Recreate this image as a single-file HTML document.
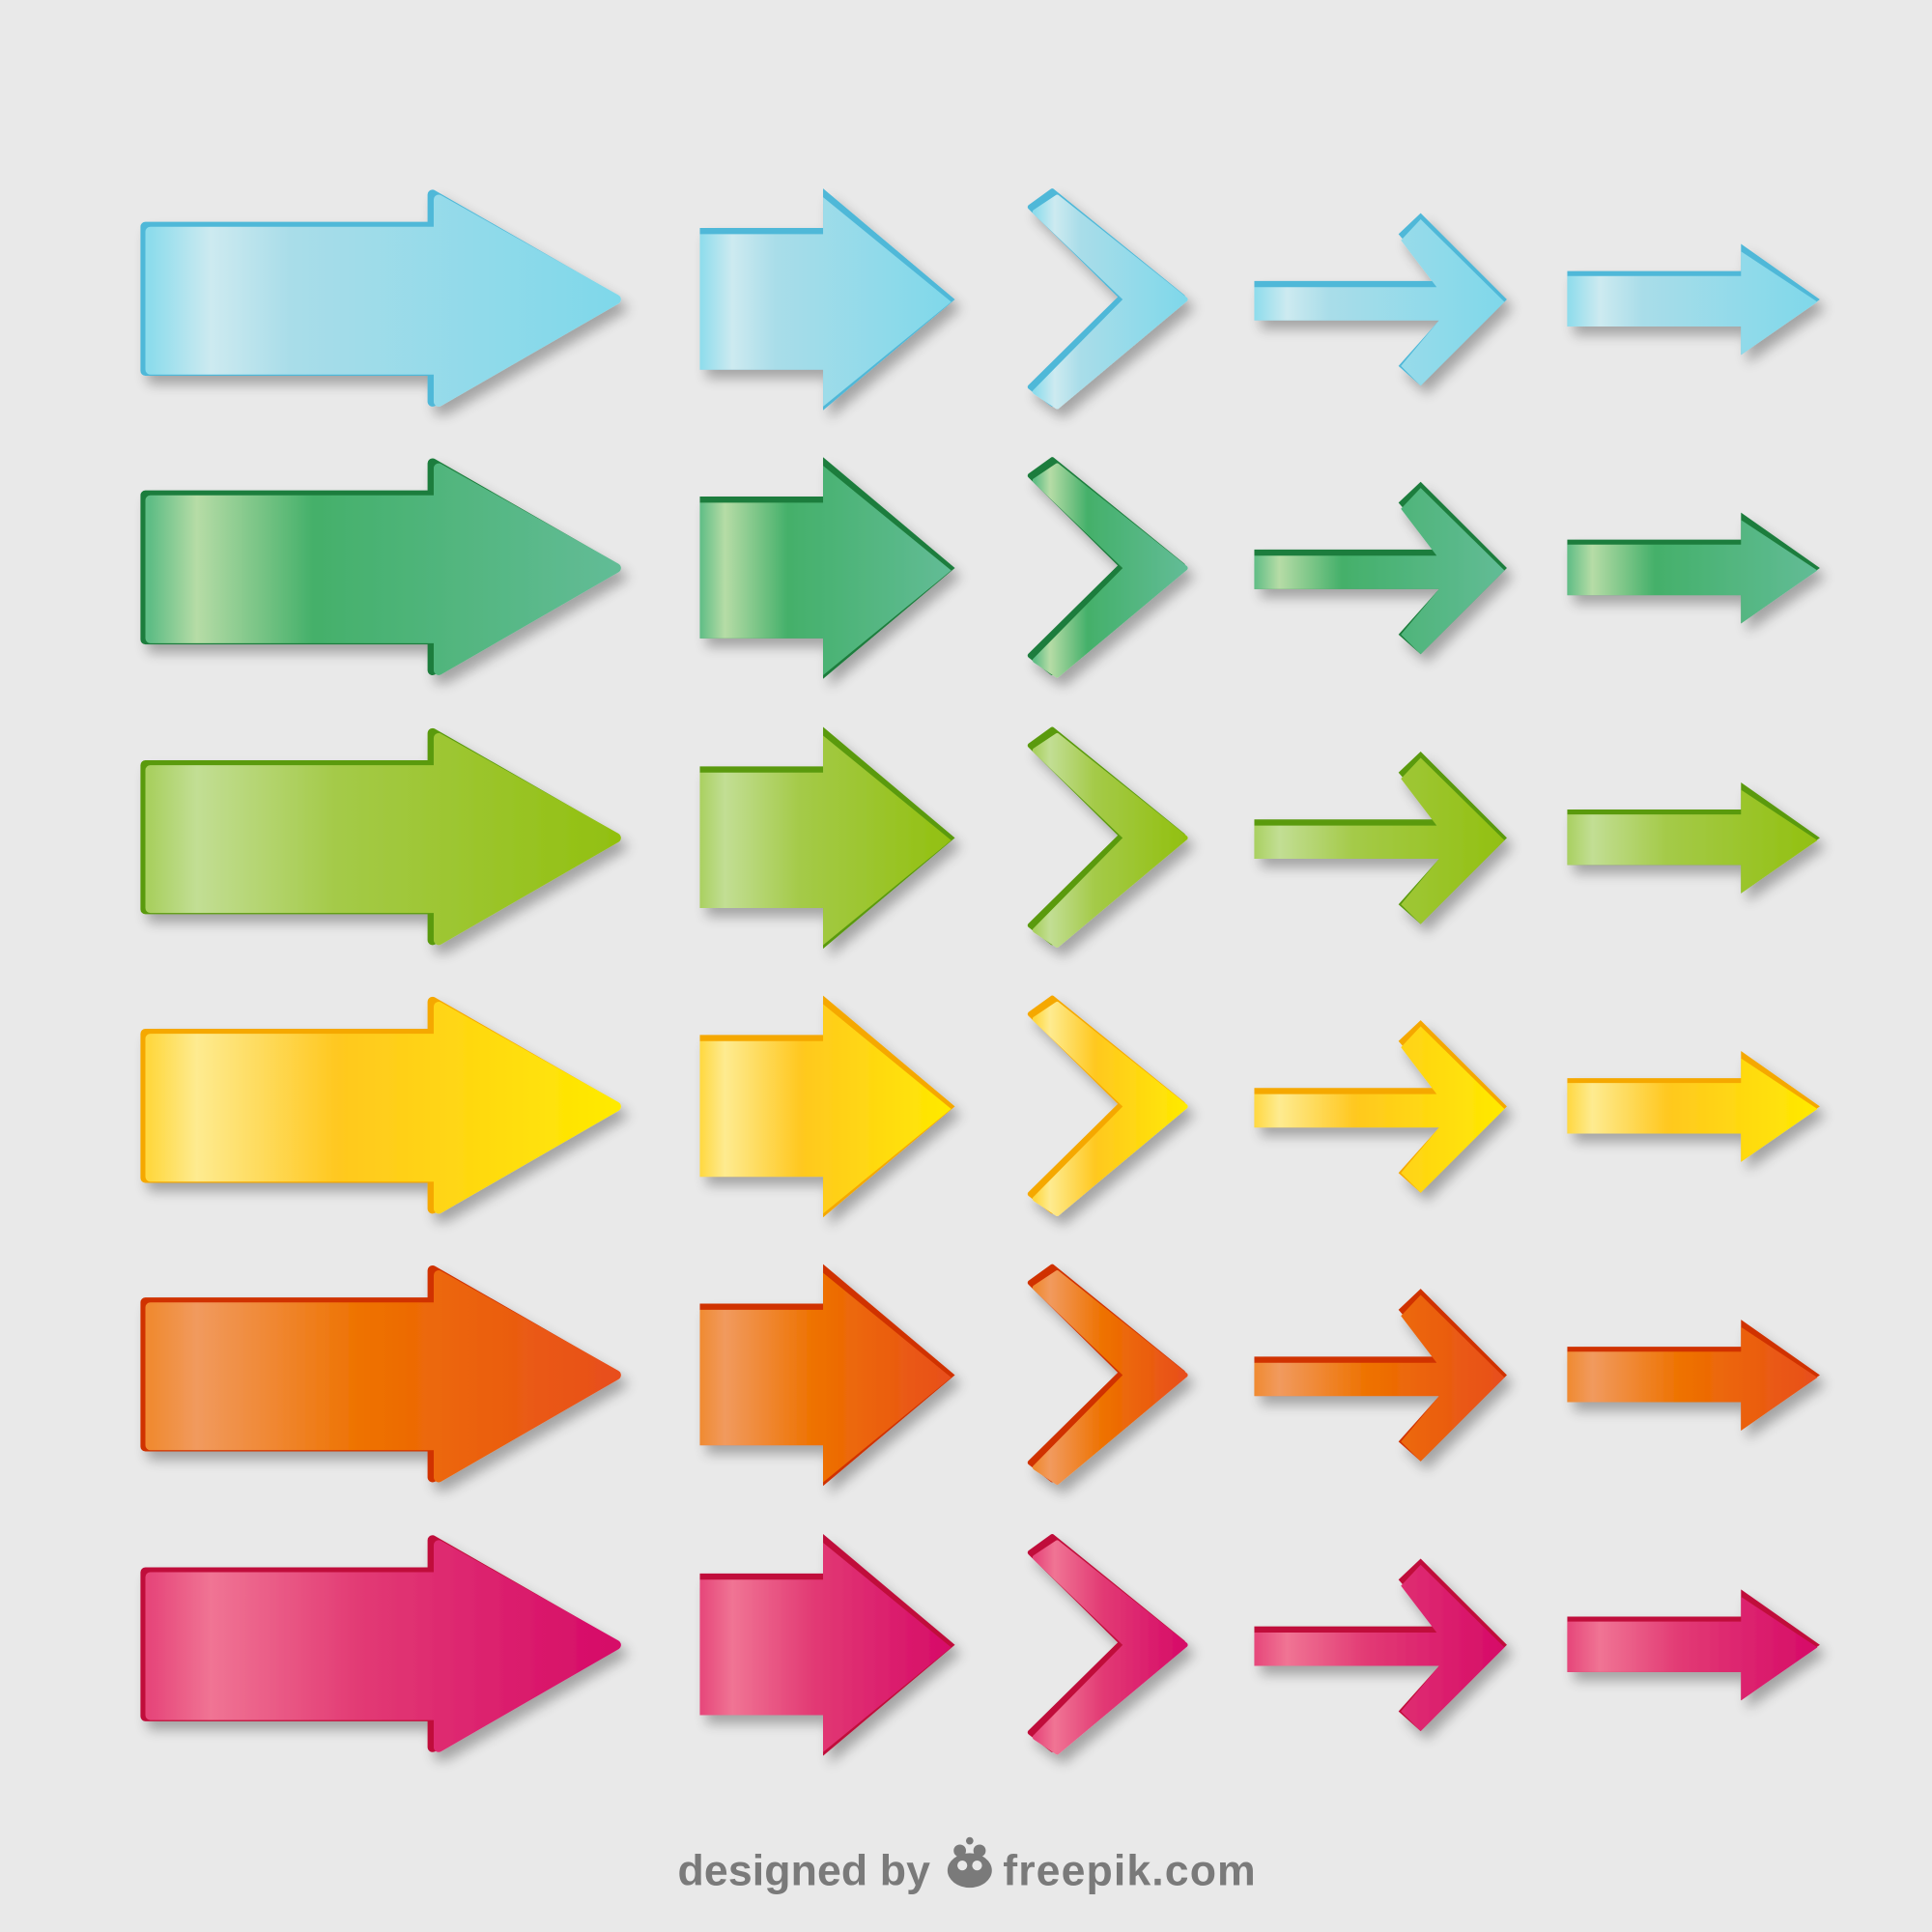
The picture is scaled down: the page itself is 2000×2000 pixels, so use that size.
<!DOCTYPE html>
<html><head><meta charset="utf-8"><style>
html,body{margin:0;padding:0;background:#e9e9e9}
svg{display:block}
.f{stroke-linejoin:round}
</style></head><body>
<svg width="2000" height="2000" viewBox="0 0 1568 1568" xmlns="http://www.w3.org/2000/svg">
<defs>
<filter id="sh" x="-20%" y="-20%" width="150%" height="160%">
<feGaussianBlur in="SourceAlpha" stdDeviation="5"/><feOffset dx="5" dy="7"/>
<feComponentTransfer><feFuncA type="linear" slope="0.3"/></feComponentTransfer>
<feMerge><feMergeNode/><feMergeNode in="SourceGraphic"/></feMerge></filter>
<linearGradient id="g1"><stop offset="0" stop-color="#8ddcec"/><stop offset=".13" stop-color="#cdeaf0"/><stop offset=".3" stop-color="#a9dde9"/><stop offset="1" stop-color="#7fd8ea"/></linearGradient>
<linearGradient id="g2"><stop offset="0" stop-color="#5fbd85"/><stop offset=".1" stop-color="#b6dca6"/><stop offset=".35" stop-color="#44b06a"/><stop offset="1" stop-color="#62bc96"/></linearGradient>
<linearGradient id="g3"><stop offset="0" stop-color="#a9d060"/><stop offset=".1" stop-color="#c2de94"/><stop offset=".4" stop-color="#a4ca48"/><stop offset="1" stop-color="#92c010"/></linearGradient>
<linearGradient id="g4"><stop offset="0" stop-color="#ffd840"/><stop offset=".1" stop-color="#feeb90"/><stop offset=".4" stop-color="#ffc820"/><stop offset="1" stop-color="#ffea00"/></linearGradient>
<linearGradient id="g5"><stop offset="0" stop-color="#f08a30"/><stop offset=".1" stop-color="#f19a5e"/><stop offset=".45" stop-color="#ee7200"/><stop offset="1" stop-color="#e84e1c"/></linearGradient>
<linearGradient id="g6"><stop offset="0" stop-color="#e6467a"/><stop offset=".13" stop-color="#f07494"/><stop offset=".45" stop-color="#e23a74"/><stop offset="1" stop-color="#d60a68"/></linearGradient>
</defs>

<g transform="translate(0,0)" fill="#4fb8d8" stroke="#4fb8d8">
<g filter="url(#sh)"><path d="M118 184H351V158L496 241L351 326V301H118Z" stroke-width="8" class="f"/><path d="M122 188H356V162L500 243L356 326V300H122Z" fill="url(#g1)" stroke="url(#g1)" stroke-width="8" class="f"/></g>
<g filter="url(#sh)" stroke="none"><path d="M568 185H668V153L775 243L668 333V300H568Z"/><path d="M568 190H668V160L772 245L668 330V300H568Z" fill="url(#g1)"/></g>
<g filter="url(#sh)"><path d="M836 168L854 155L960 241L854 328L836 314L910 241Z" stroke-width="4" class="f"/><path d="M840 172L858 160L962 243L858 330L840 318L914 243Z" fill="url(#g1)" stroke="url(#g1)" stroke-width="4" class="f"/></g>
<g filter="url(#sh)" stroke="none"><path d="M1018 228H1168L1135 190L1153 173L1223 243L1153 313L1135 297L1168 260H1018Z"/><path d="M1018 233H1166L1137 195L1153 178L1221 245L1153 313L1137 297L1168 260H1018Z" fill="url(#g1)"/></g>
<g filter="url(#sh)" stroke="none"><path d="M1272 220H1413V198L1477 243L1413 288V265H1272Z"/><path d="M1272 224H1413V204L1475 245L1413 288V265H1272Z" fill="url(#g1)"/></g>
</g>

<g transform="translate(0,218)" fill="#1e7d3c" stroke="#1e7d3c">
<g filter="url(#sh)"><path d="M118 184H351V158L496 241L351 326V301H118Z" stroke-width="8" class="f"/><path d="M122 188H356V162L500 243L356 326V300H122Z" fill="url(#g2)" stroke="url(#g2)" stroke-width="8" class="f"/></g>
<g filter="url(#sh)" stroke="none"><path d="M568 185H668V153L775 243L668 333V300H568Z"/><path d="M568 190H668V160L772 245L668 330V300H568Z" fill="url(#g2)"/></g>
<g filter="url(#sh)"><path d="M836 168L854 155L960 241L854 328L836 314L910 241Z" stroke-width="4" class="f"/><path d="M840 172L858 160L962 243L858 330L840 318L914 243Z" fill="url(#g2)" stroke="url(#g2)" stroke-width="4" class="f"/></g>
<g filter="url(#sh)" stroke="none"><path d="M1018 228H1168L1135 190L1153 173L1223 243L1153 313L1135 297L1168 260H1018Z"/><path d="M1018 233H1166L1137 195L1153 178L1221 245L1153 313L1137 297L1168 260H1018Z" fill="url(#g2)"/></g>
<g filter="url(#sh)" stroke="none"><path d="M1272 220H1413V198L1477 243L1413 288V265H1272Z"/><path d="M1272 224H1413V204L1475 245L1413 288V265H1272Z" fill="url(#g2)"/></g>
</g>

<g transform="translate(0,437)" fill="#5a9a10" stroke="#5a9a10">
<g filter="url(#sh)"><path d="M118 184H351V158L496 241L351 326V301H118Z" stroke-width="8" class="f"/><path d="M122 188H356V162L500 243L356 326V300H122Z" fill="url(#g3)" stroke="url(#g3)" stroke-width="8" class="f"/></g>
<g filter="url(#sh)" stroke="none"><path d="M568 185H668V153L775 243L668 333V300H568Z"/><path d="M568 190H668V160L772 245L668 330V300H568Z" fill="url(#g3)"/></g>
<g filter="url(#sh)"><path d="M836 168L854 155L960 241L854 328L836 314L910 241Z" stroke-width="4" class="f"/><path d="M840 172L858 160L962 243L858 330L840 318L914 243Z" fill="url(#g3)" stroke="url(#g3)" stroke-width="4" class="f"/></g>
<g filter="url(#sh)" stroke="none"><path d="M1018 228H1168L1135 190L1153 173L1223 243L1153 313L1135 297L1168 260H1018Z"/><path d="M1018 233H1166L1137 195L1153 178L1221 245L1153 313L1137 297L1168 260H1018Z" fill="url(#g3)"/></g>
<g filter="url(#sh)" stroke="none"><path d="M1272 220H1413V198L1477 243L1413 288V265H1272Z"/><path d="M1272 224H1413V204L1475 245L1413 288V265H1272Z" fill="url(#g3)"/></g>
</g>

<g transform="translate(0,655)" fill="#f5a800" stroke="#f5a800">
<g filter="url(#sh)"><path d="M118 184H351V158L496 241L351 326V301H118Z" stroke-width="8" class="f"/><path d="M122 188H356V162L500 243L356 326V300H122Z" fill="url(#g4)" stroke="url(#g4)" stroke-width="8" class="f"/></g>
<g filter="url(#sh)" stroke="none"><path d="M568 185H668V153L775 243L668 333V300H568Z"/><path d="M568 190H668V160L772 245L668 330V300H568Z" fill="url(#g4)"/></g>
<g filter="url(#sh)"><path d="M836 168L854 155L960 241L854 328L836 314L910 241Z" stroke-width="4" class="f"/><path d="M840 172L858 160L962 243L858 330L840 318L914 243Z" fill="url(#g4)" stroke="url(#g4)" stroke-width="4" class="f"/></g>
<g filter="url(#sh)" stroke="none"><path d="M1018 228H1168L1135 190L1153 173L1223 243L1153 313L1135 297L1168 260H1018Z"/><path d="M1018 233H1166L1137 195L1153 178L1221 245L1153 313L1137 297L1168 260H1018Z" fill="url(#g4)"/></g>
<g filter="url(#sh)" stroke="none"><path d="M1272 220H1413V198L1477 243L1413 288V265H1272Z"/><path d="M1272 224H1413V204L1475 245L1413 288V265H1272Z" fill="url(#g4)"/></g>
</g>

<g transform="translate(0,873)" fill="#d03000" stroke="#d03000">
<g filter="url(#sh)"><path d="M118 184H351V158L496 241L351 326V301H118Z" stroke-width="8" class="f"/><path d="M122 188H356V162L500 243L356 326V300H122Z" fill="url(#g5)" stroke="url(#g5)" stroke-width="8" class="f"/></g>
<g filter="url(#sh)" stroke="none"><path d="M568 185H668V153L775 243L668 333V300H568Z"/><path d="M568 190H668V160L772 245L668 330V300H568Z" fill="url(#g5)"/></g>
<g filter="url(#sh)"><path d="M836 168L854 155L960 241L854 328L836 314L910 241Z" stroke-width="4" class="f"/><path d="M840 172L858 160L962 243L858 330L840 318L914 243Z" fill="url(#g5)" stroke="url(#g5)" stroke-width="4" class="f"/></g>
<g filter="url(#sh)" stroke="none"><path d="M1018 228H1168L1135 190L1153 173L1223 243L1153 313L1135 297L1168 260H1018Z"/><path d="M1018 233H1166L1137 195L1153 178L1221 245L1153 313L1137 297L1168 260H1018Z" fill="url(#g5)"/></g>
<g filter="url(#sh)" stroke="none"><path d="M1272 220H1413V198L1477 243L1413 288V265H1272Z"/><path d="M1272 224H1413V204L1475 245L1413 288V265H1272Z" fill="url(#g5)"/></g>
</g>

<g transform="translate(0,1092)" fill="#c0103a" stroke="#c0103a">
<g filter="url(#sh)"><path d="M118 184H351V158L496 241L351 326V301H118Z" stroke-width="8" class="f"/><path d="M122 188H356V162L500 243L356 326V300H122Z" fill="url(#g6)" stroke="url(#g6)" stroke-width="8" class="f"/></g>
<g filter="url(#sh)" stroke="none"><path d="M568 185H668V153L775 243L668 333V300H568Z"/><path d="M568 190H668V160L772 245L668 330V300H568Z" fill="url(#g6)"/></g>
<g filter="url(#sh)"><path d="M836 168L854 155L960 241L854 328L836 314L910 241Z" stroke-width="4" class="f"/><path d="M840 172L858 160L962 243L858 330L840 318L914 243Z" fill="url(#g6)" stroke="url(#g6)" stroke-width="4" class="f"/></g>
<g filter="url(#sh)" stroke="none"><path d="M1018 228H1168L1135 190L1153 173L1223 243L1153 313L1135 297L1168 260H1018Z"/><path d="M1018 233H1166L1137 195L1153 178L1221 245L1153 313L1137 297L1168 260H1018Z" fill="url(#g6)"/></g>
<g filter="url(#sh)" stroke="none"><path d="M1272 220H1413V198L1477 243L1413 288V265H1272Z"/><path d="M1272 224H1413V204L1475 245L1413 288V265H1272Z" fill="url(#g6)"/></g>
</g>

<g font-family="Liberation Sans, sans-serif" font-weight="bold" fill="#7a7a7a" font-size="35">
<text x="550" y="1530" textLength="205">designed by</text>
<text x="814" y="1530" textLength="205">freepik.com</text>
</g>
<g fill="#7a7a7a"><ellipse cx="787" cy="1518" rx="18" ry="14"/><circle cx="779" cy="1502" r="5"/><circle cx="795" cy="1502" r="5"/><circle cx="787" cy="1494" r="3"/></g>
<circle cx="781" cy="1514" r="4" fill="#e9e9e9"/><circle cx="793" cy="1514" r="4" fill="#e9e9e9"/>
</svg>
</body></html>
